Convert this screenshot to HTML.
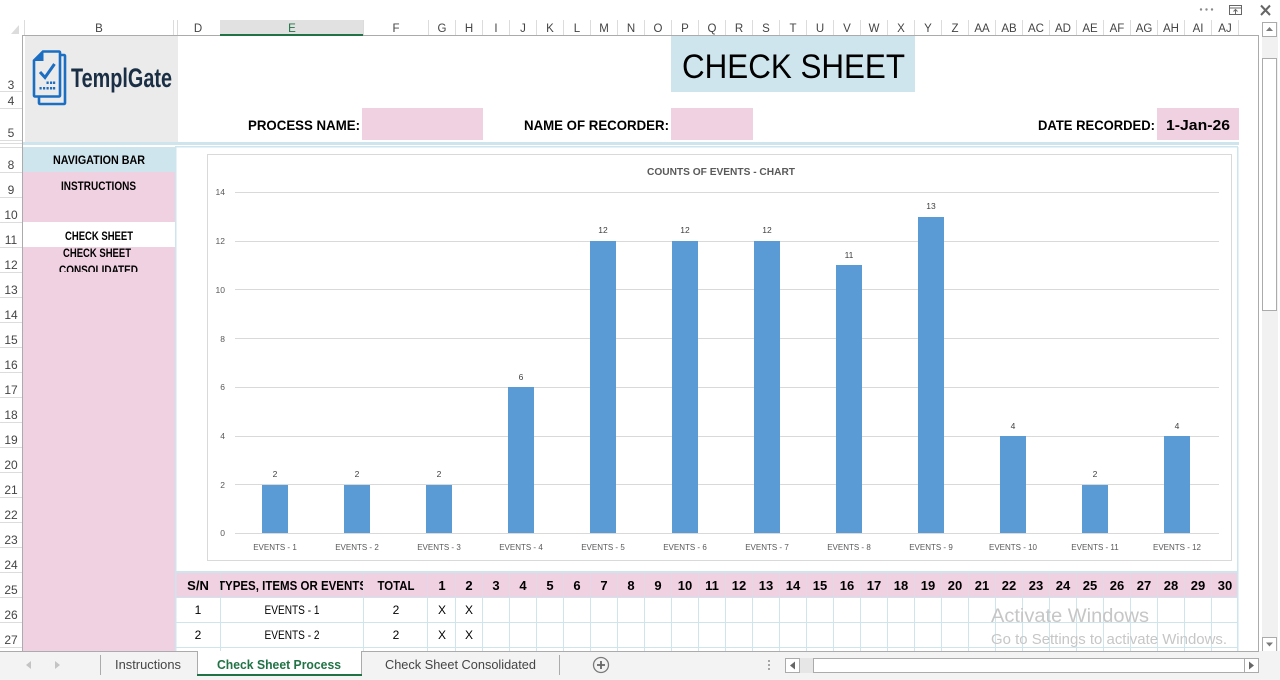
<!DOCTYPE html>
<html><head><meta charset="utf-8"><title>Check Sheet</title>
<style>
html,body{margin:0;padding:0;background:#fff;width:1280px;height:680px;overflow:hidden}
svg{display:block}
text{font-family:"Liberation Sans",sans-serif}
.r rect,.r line{shape-rendering:crispEdges}
.ch text{font-size:11.5px;fill:#444;text-anchor:middle}
.rh text{font-size:12px;fill:#444;text-anchor:middle}
.b{font-weight:bold;fill:#000}
.ax text{font-size:8.5px;fill:#595959;text-anchor:end}
.cat text{font-size:8px;fill:#595959;text-anchor:middle}
.dl text{font-size:8.5px;fill:#404040;text-anchor:middle}
.hd text{font-size:13px;font-weight:bold;fill:#000;text-anchor:middle}
.c text{font-size:12px;fill:#000;text-anchor:middle}
</style></head><body>
<svg width="1280" height="680" viewBox="0 0 1280 680" xmlns="http://www.w3.org/2000/svg">
<defs>
<clipPath id="c1"><rect x="220" y="573" width="143" height="24"/></clipPath>
<clipPath id="c2"><rect x="24" y="247" width="150" height="25"/></clipPath>
</defs>
<g class="r">
<rect x="0" y="0" width="1280" height="680" fill="#fff"/>
<!-- column header -->
<rect x="220" y="20" width="143" height="15" fill="#e1e1e1"/>
<rect x="220" y="34" width="143" height="2" fill="#217346"/>
<g stroke="#dcdcdc" fill="none">
<line x1="24.5" y1="20" x2="24.5" y2="35"/><line x1="173.5" y1="20" x2="173.5" y2="35"/><line x1="177.5" y1="20" x2="177.5" y2="35"/><line x1="363.5" y1="20" x2="363.5" y2="35"/><line x1="428.5" y1="20" x2="428.5" y2="35"/>
<line x1="455.5" y1="20" x2="455.5" y2="35"/><line x1="482.5" y1="20" x2="482.5" y2="35"/><line x1="509.5" y1="20" x2="509.5" y2="35"/><line x1="536.5" y1="20" x2="536.5" y2="35"/><line x1="563.5" y1="20" x2="563.5" y2="35"/><line x1="590.5" y1="20" x2="590.5" y2="35"/><line x1="617.5" y1="20" x2="617.5" y2="35"/><line x1="644.5" y1="20" x2="644.5" y2="35"/><line x1="671.5" y1="20" x2="671.5" y2="35"/><line x1="698.5" y1="20" x2="698.5" y2="35"/><line x1="725.5" y1="20" x2="725.5" y2="35"/><line x1="752.5" y1="20" x2="752.5" y2="35"/><line x1="779.5" y1="20" x2="779.5" y2="35"/><line x1="806.5" y1="20" x2="806.5" y2="35"/><line x1="833.5" y1="20" x2="833.5" y2="35"/><line x1="860.5" y1="20" x2="860.5" y2="35"/><line x1="887.5" y1="20" x2="887.5" y2="35"/><line x1="914.5" y1="20" x2="914.5" y2="35"/><line x1="941.5" y1="20" x2="941.5" y2="35"/><line x1="968.5" y1="20" x2="968.5" y2="35"/><line x1="995.5" y1="20" x2="995.5" y2="35"/><line x1="1022.5" y1="20" x2="1022.5" y2="35"/><line x1="1049.5" y1="20" x2="1049.5" y2="35"/><line x1="1076.5" y1="20" x2="1076.5" y2="35"/><line x1="1103.5" y1="20" x2="1103.5" y2="35"/><line x1="1130.5" y1="20" x2="1130.5" y2="35"/><line x1="1157.5" y1="20" x2="1157.5" y2="35"/><line x1="1184.5" y1="20" x2="1184.5" y2="35"/><line x1="1211.5" y1="20" x2="1211.5" y2="35"/><line x1="1238.5" y1="20" x2="1238.5" y2="35"/>
</g>
<rect x="22" y="35" width="198" height="1" fill="#ababab"/><rect x="363" y="35" width="896" height="1" fill="#ababab"/>
<!-- row header separators -->
<g stroke="#dcdcdc">
<line x1="0" y1="91.5" x2="22" y2="91.5"/><line x1="0" y1="108.5" x2="22" y2="108.5"/><line x1="0" y1="140.5" x2="22" y2="140.5"/><line x1="0" y1="143.5" x2="22" y2="143.5"/><line x1="0" y1="147.5" x2="22" y2="147.5"/>
<line x1="0" y1="172.5" x2="22" y2="172.5"/><line x1="0" y1="197.5" x2="22" y2="197.5"/><line x1="0" y1="222.5" x2="22" y2="222.5"/><line x1="0" y1="247.5" x2="22" y2="247.5"/><line x1="0" y1="272.5" x2="22" y2="272.5"/><line x1="0" y1="297.5" x2="22" y2="297.5"/><line x1="0" y1="322.5" x2="22" y2="322.5"/><line x1="0" y1="347.5" x2="22" y2="347.5"/><line x1="0" y1="372.5" x2="22" y2="372.5"/><line x1="0" y1="397.5" x2="22" y2="397.5"/><line x1="0" y1="422.5" x2="22" y2="422.5"/><line x1="0" y1="447.5" x2="22" y2="447.5"/><line x1="0" y1="472.5" x2="22" y2="472.5"/><line x1="0" y1="497.5" x2="22" y2="497.5"/><line x1="0" y1="522.5" x2="22" y2="522.5"/><line x1="0" y1="547.5" x2="22" y2="547.5"/><line x1="0" y1="572.5" x2="22" y2="572.5"/><line x1="0" y1="597.5" x2="22" y2="597.5"/><line x1="0" y1="622.5" x2="22" y2="622.5"/><line x1="0" y1="647.5" x2="22" y2="647.5"/>
</g>
<rect x="22" y="36" width="1" height="615" fill="#ababab"/>
<rect x="1258" y="36" width="1" height="615" fill="#ababab"/>
<!-- header blocks -->
<rect x="25" y="36" width="153" height="106" fill="#ebebeb"/>
<rect x="671" y="36" width="244" height="56" fill="#cfe5ed"/>
<rect x="362" y="108" width="121" height="32" fill="#f0d1e1"/>
<rect x="671" y="108" width="82" height="32" fill="#f0d1e1"/>
<rect x="1157" y="108" width="82" height="32" fill="#f0d1e1"/>
<rect x="23" y="142" width="1216" height="3" fill="#cfe5ed"/>
<rect x="175" y="146" width="1063" height="1.5" fill="#cfe5ed"/>
<rect x="23" y="147" width="152" height="25" fill="#cfe5ed"/>
<rect x="23" y="172" width="152" height="479" fill="#f0d1e1"/>
<rect x="23" y="222" width="152" height="25" fill="#fff"/>
<rect x="175" y="147" width="1.5" height="504" fill="#cfe5ed"/>
<rect x="1237" y="147" width="1.5" height="504" fill="#cfe5ed"/>
<!-- chart -->
<rect x="207.5" y="154.5" width="1024" height="406" fill="#fff" stroke="#d9d9d9"/>
<g stroke="#d9d9d9">
<line x1="235" y1="192.5" x2="1219" y2="192.5"/><line x1="235" y1="241.5" x2="1219" y2="241.5"/><line x1="235" y1="289.5" x2="1219" y2="289.5"/><line x1="235" y1="338.5" x2="1219" y2="338.5"/><line x1="235" y1="387.5" x2="1219" y2="387.5"/><line x1="235" y1="436.5" x2="1219" y2="436.5"/><line x1="235" y1="484.5" x2="1219" y2="484.5"/><line x1="235" y1="533.5" x2="1219" y2="533.5"/>
</g>
<g fill="#5b9bd5">
<rect x="262" y="485" width="26" height="48"/><rect x="344" y="485" width="26" height="48"/><rect x="426" y="485" width="26" height="48"/><rect x="508" y="387" width="26" height="146"/><rect x="590" y="241" width="26" height="292"/><rect x="672" y="241" width="26" height="292"/><rect x="754" y="241" width="26" height="292"/><rect x="836" y="265" width="26" height="268"/><rect x="918" y="217" width="26" height="316"/><rect x="1000" y="436" width="26" height="97"/><rect x="1082" y="485" width="26" height="48"/><rect x="1164" y="436" width="26" height="97"/>
</g>
<!-- table -->
<rect x="176" y="571" width="1062" height="2" fill="#cfe5ed"/>
<rect x="176.5" y="573" width="1060.5" height="24" fill="#f0d1e1"/>
<g stroke="#cfe5ed">
<line x1="176" y1="597.5" x2="1238" y2="597.5"/><line x1="176" y1="622.5" x2="1238" y2="622.5"/><line x1="176" y1="647.5" x2="1238" y2="647.5"/>
<line x1="220.5" y1="573" x2="220.5" y2="651"/><line x1="363.5" y1="573" x2="363.5" y2="651"/><line x1="427.5" y1="573" x2="427.5" y2="651"/>
<line x1="455.5" y1="573" x2="455.5" y2="651"/><line x1="482.5" y1="573" x2="482.5" y2="651"/><line x1="509.5" y1="573" x2="509.5" y2="651"/><line x1="536.5" y1="573" x2="536.5" y2="651"/><line x1="563.5" y1="573" x2="563.5" y2="651"/><line x1="590.5" y1="573" x2="590.5" y2="651"/><line x1="617.5" y1="573" x2="617.5" y2="651"/><line x1="644.5" y1="573" x2="644.5" y2="651"/><line x1="671.5" y1="573" x2="671.5" y2="651"/><line x1="698.5" y1="573" x2="698.5" y2="651"/><line x1="725.5" y1="573" x2="725.5" y2="651"/><line x1="752.5" y1="573" x2="752.5" y2="651"/><line x1="779.5" y1="573" x2="779.5" y2="651"/><line x1="806.5" y1="573" x2="806.5" y2="651"/><line x1="833.5" y1="573" x2="833.5" y2="651"/><line x1="860.5" y1="573" x2="860.5" y2="651"/><line x1="887.5" y1="573" x2="887.5" y2="651"/><line x1="914.5" y1="573" x2="914.5" y2="651"/><line x1="941.5" y1="573" x2="941.5" y2="651"/><line x1="968.5" y1="573" x2="968.5" y2="651"/><line x1="995.5" y1="573" x2="995.5" y2="651"/><line x1="1022.5" y1="573" x2="1022.5" y2="651"/><line x1="1049.5" y1="573" x2="1049.5" y2="651"/><line x1="1076.5" y1="573" x2="1076.5" y2="651"/><line x1="1103.5" y1="573" x2="1103.5" y2="651"/><line x1="1130.5" y1="573" x2="1130.5" y2="651"/><line x1="1157.5" y1="573" x2="1157.5" y2="651"/><line x1="1184.5" y1="573" x2="1184.5" y2="651"/><line x1="1211.5" y1="573" x2="1211.5" y2="651"/>
</g>
<rect x="176.5" y="573" width="1060.5" height="24" fill="#f0d1e1" opacity="0.65"/>
<!-- right scrollbar -->
<rect x="1262" y="22" width="16" height="630" fill="#f1f1f1"/>
<rect x="1262.5" y="22.5" width="14" height="14" fill="#fff" stroke="#ababab"/>
<rect x="1262.5" y="58.5" width="14" height="252" fill="#fff" stroke="#ababab"/>
<rect x="1262.5" y="637.5" width="14" height="14" fill="#fff" stroke="#ababab"/>
<!-- bottom bar -->
<rect x="0" y="651" width="1280" height="29" fill="#f3f3f3"/>
<rect x="0" y="651" width="1259" height="1" fill="#ababab"/>
<rect x="197" y="651" width="165" height="24" fill="#fff"/>
<rect x="197" y="651" width="1" height="24" fill="#ababab"/>
<rect x="361" y="651" width="1" height="24" fill="#ababab"/>
<rect x="197" y="674" width="165" height="2" fill="#217346"/>
<rect x="198" y="651" width="163" height="1" fill="#fff"/>
<rect x="100" y="655" width="1" height="20" fill="#ababab"/>
<rect x="559" y="655" width="1" height="20" fill="#ababab"/>
<rect x="768" y="660" width="2" height="2" fill="#a6a6a6"/><rect x="768" y="664" width="2" height="2" fill="#a6a6a6"/><rect x="768" y="668" width="2" height="2" fill="#a6a6a6"/>
<rect x="800" y="658" width="14" height="15" fill="#e6e6e6"/>
<rect x="785.5" y="658.5" width="14" height="14" fill="#fff" stroke="#ababab"/>
<rect x="813.5" y="658.5" width="431" height="14" fill="#fff" stroke="#ababab"/>
<rect x="1244.5" y="658.5" width="14" height="14" fill="#fff" stroke="#ababab"/>
</g>
<!-- arrows / icons -->
<path d="M19 25V34H11Z" fill="#dcdcdc"/>
<path d="M1266 31l3.500-4 3.500 4z" fill="#7a7a7a"/>
<path d="M1266 642.500h7l-3.500 4z" fill="#7a7a7a"/>
<path d="M26 665l5-4v8z" fill="#c4c4c4"/><path d="M55 661l5 4-5 4z" fill="#c4c4c4"/>
<path d="M795 661.500v8l-5-4z" fill="#666"/><path d="M1249 661.500v8l5-4z" fill="#666"/>
<circle cx="601" cy="665" r="7.500" fill="none" stroke="#7a7a7a" stroke-width="1.300"/>
<path d="M597 665h8M601 661v8" stroke="#666" stroke-width="1.800" fill="none"/>
<circle cx="1201" cy="9.500" r="1.200" fill="#8a8a8a"/><circle cx="1206.500" cy="9.500" r="1.200" fill="#8a8a8a"/><circle cx="1212" cy="9.500" r="1.200" fill="#8a8a8a"/>
<path d="M1229.500 5.500h12v9h-12zM1229.500 8h12M1235.500 14v-4.500M1233.500 11.500l2-2 2 2" fill="none" stroke="#666" stroke-width="1"/>
<path d="M1261 5.500l9 9.500M1270 5.500l-9 9.500" stroke="#666" stroke-width="2" fill="none"/>
<!-- logo -->
<path d="M61 55h3a1 1 0 0 1 1 1v47a1 1 0 0 1-1 1H40a1 1 0 0 1-1-1v-6" fill="none" stroke="#1b6ec2" stroke-width="2.600"/>
<path d="M43 51.500h16a1 1 0 0 1 1 1v43a1 1 0 0 1-1 1H35a1 1 0 0 1-1-1V60.500z" fill="#ebebeb" stroke="#1b6ec2" stroke-width="2.600"/>
<path d="M34 61h9.500v-9.500z" fill="#1b6ec2"/>
<path d="M40 72l5 5.500 9.500-13.500" fill="none" stroke="#1b6ec2" stroke-width="3"/>
<path d="M39.500 87h2.200v2.500h-2.200zM43 87h2.200v2.500h-2.200zM46.500 87h2.200v2.500h-2.200zM50 87h2.200v2.500h-2.200zM53 87h2.200v2.500h-2.200zM50 81.500h2.200v2.500h-2.200zM53 81.500h2.200v2.500h-2.200zM46.500 81.500h2.200v2.500h-2.200z" fill="#1b6ec2"/>
<text x="71" y="87" font-size="27" font-weight="bold" fill="#1a2f45" textLength="101" lengthAdjust="spacingAndGlyphs">TemplGate</text>
<!-- column labels -->
<g class="ch">
<text x="99" y="32">B</text><text x="198" y="32">D</text><text x="292" y="32" style="fill:#217346">E</text><text x="396" y="32">F</text><text x="442" y="32">G</text><text x="469" y="32">H</text><text x="496" y="32">I</text><text x="523" y="32">J</text><text x="550" y="32">K</text><text x="577" y="32">L</text><text x="604" y="32">M</text><text x="631" y="32">N</text><text x="658" y="32">O</text><text x="685" y="32">P</text><text x="712" y="32">Q</text><text x="739" y="32">R</text><text x="766" y="32">S</text><text x="793" y="32">T</text><text x="820" y="32">U</text><text x="847" y="32">V</text><text x="874" y="32">W</text><text x="901" y="32">X</text><text x="928" y="32">Y</text><text x="955" y="32">Z</text><text x="982" y="32">AA</text><text x="1009" y="32">AB</text><text x="1036" y="32">AC</text><text x="1063" y="32">AD</text><text x="1090" y="32">AE</text><text x="1117" y="32">AF</text><text x="1144" y="32">AG</text><text x="1171" y="32">AH</text><text x="1198" y="32">AI</text><text x="1225" y="32">AJ</text>
</g>
<!-- row labels -->
<g class="rh">
<text x="11" y="89">3</text><text x="11" y="105">4</text><text x="11" y="137">5</text><text x="11" y="169">8</text><text x="11" y="194">9</text><text x="11" y="219">10</text><text x="11" y="244">11</text><text x="11" y="269">12</text><text x="11" y="294">13</text><text x="11" y="319">14</text><text x="11" y="344">15</text><text x="11" y="369">16</text><text x="11" y="394">17</text><text x="11" y="419">18</text><text x="11" y="444">19</text><text x="11" y="469">20</text><text x="11" y="494">21</text><text x="11" y="519">22</text><text x="11" y="544">23</text><text x="11" y="569">24</text><text x="11" y="594">25</text><text x="11" y="619">26</text><text x="11" y="644">27</text>
</g>
<!-- titles -->
<text x="682" y="78" font-size="34" fill="#000" textLength="223" lengthAdjust="spacingAndGlyphs">CHECK SHEET</text>
<text class="b" x="248" y="130" font-size="14" textLength="112" lengthAdjust="spacingAndGlyphs">PROCESS NAME:</text>
<text class="b" x="524" y="130" font-size="14" textLength="145" lengthAdjust="spacingAndGlyphs">NAME OF RECORDER:</text>
<text class="b" x="1038" y="130" font-size="14" textLength="117" lengthAdjust="spacingAndGlyphs">DATE RECORDED:</text>
<text class="b" x="1166" y="130" font-size="15" textLength="64" lengthAdjust="spacingAndGlyphs">1-Jan-26</text>
<!-- nav -->
<text class="b" x="53" y="164" font-size="11.500" textLength="92" lengthAdjust="spacingAndGlyphs">NAVIGATION BAR</text>
<text class="b" x="61" y="190" font-size="11.500" textLength="75" lengthAdjust="spacingAndGlyphs">INSTRUCTIONS</text>
<text class="b" x="65" y="240" font-size="11.500" textLength="68" lengthAdjust="spacingAndGlyphs">CHECK SHEET</text>
<text class="b" x="63" y="257" font-size="11.500" textLength="68" lengthAdjust="spacingAndGlyphs">CHECK SHEET</text>
<g clip-path="url(#c2)"><text class="b" x="59" y="274" font-size="11.500" textLength="79" lengthAdjust="spacingAndGlyphs">CONSOLIDATED</text></g>
<!-- chart text -->
<text x="647" y="175" font-size="10.500" font-weight="bold" fill="#595959" textLength="148" lengthAdjust="spacingAndGlyphs">COUNTS OF EVENTS - CHART</text>
<g class="ax">
<text x="225" y="195">14</text><text x="225" y="244">12</text><text x="225" y="293">10</text><text x="225" y="342">8</text><text x="225" y="390">6</text><text x="225" y="439">4</text><text x="225" y="488">2</text><text x="225" y="536">0</text>
</g>
<g class="cat">
<text x="275" y="550">EVENTS - 1</text><text x="357" y="550">EVENTS - 2</text><text x="439" y="550">EVENTS - 3</text><text x="521" y="550">EVENTS - 4</text><text x="603" y="550">EVENTS - 5</text><text x="685" y="550">EVENTS - 6</text><text x="767" y="550">EVENTS - 7</text><text x="849" y="550">EVENTS - 8</text><text x="931" y="550">EVENTS - 9</text><text x="1013" y="550">EVENTS - 10</text><text x="1095" y="550">EVENTS - 11</text><text x="1177" y="550">EVENTS - 12</text>
</g>
<g class="dl">
<text x="275" y="477">2</text><text x="357" y="477">2</text><text x="439" y="477">2</text><text x="521" y="380">6</text><text x="603" y="233">12</text><text x="685" y="233">12</text><text x="767" y="233">12</text><text x="849" y="258">11</text><text x="931" y="209">13</text><text x="1013" y="429">4</text><text x="1095" y="477">2</text><text x="1177" y="429">4</text>
</g>
<!-- table text -->
<g class="hd">
<text x="198" y="590">S/N</text>
<text x="396" y="590" textLength="37" lengthAdjust="spacingAndGlyphs">TOTAL</text>
<text x="442" y="590">1</text><text x="469" y="590">2</text><text x="496" y="590">3</text><text x="523" y="590">4</text><text x="550" y="590">5</text><text x="577" y="590">6</text><text x="604" y="590">7</text><text x="631" y="590">8</text><text x="658" y="590">9</text><text x="685" y="590">10</text><text x="712" y="590">11</text><text x="739" y="590">12</text><text x="766" y="590">13</text><text x="793" y="590">14</text><text x="820" y="590">15</text><text x="847" y="590">16</text><text x="874" y="590">17</text><text x="901" y="590">18</text><text x="928" y="590">19</text><text x="955" y="590">20</text><text x="982" y="590">21</text><text x="1009" y="590">22</text><text x="1036" y="590">23</text><text x="1063" y="590">24</text><text x="1090" y="590">25</text><text x="1117" y="590">26</text><text x="1144" y="590">27</text><text x="1171" y="590">28</text><text x="1198" y="590">29</text><text x="1225" y="590">30</text>
</g>
<g clip-path="url(#c1)"><text x="218" y="590" font-size="13" font-weight="bold" fill="#000" textLength="149" lengthAdjust="spacingAndGlyphs">TYPES, ITEMS OR EVENTS</text></g>
<g class="c">
<text x="198" y="614">1</text><text x="292" y="614" textLength="55" lengthAdjust="spacingAndGlyphs">EVENTS - 1</text><text x="396" y="614">2</text><text x="442" y="614">X</text><text x="469" y="614">X</text>
<text x="198" y="639">2</text><text x="292" y="639" textLength="55" lengthAdjust="spacingAndGlyphs">EVENTS - 2</text><text x="396" y="639">2</text><text x="442" y="639">X</text><text x="469" y="639">X</text>
</g>
<!-- activate -->
<text x="991" y="622" font-size="19" fill="#c6c6c6" textLength="158" lengthAdjust="spacingAndGlyphs">Activate Windows</text>
<text x="991" y="644" font-size="14.500" fill="#c6c6c6" textLength="236" lengthAdjust="spacingAndGlyphs">Go to Settings to activate Windows.</text>
<!-- tabs -->
<text x="115" y="669" font-size="13" fill="#444" textLength="66" lengthAdjust="spacingAndGlyphs">Instructions</text>
<text x="217" y="669" font-size="13" font-weight="bold" fill="#217346" textLength="124" lengthAdjust="spacingAndGlyphs">Check Sheet Process</text>
<text x="385" y="669" font-size="13" fill="#444" textLength="151" lengthAdjust="spacingAndGlyphs">Check Sheet Consolidated</text>
</svg>
</body></html>
